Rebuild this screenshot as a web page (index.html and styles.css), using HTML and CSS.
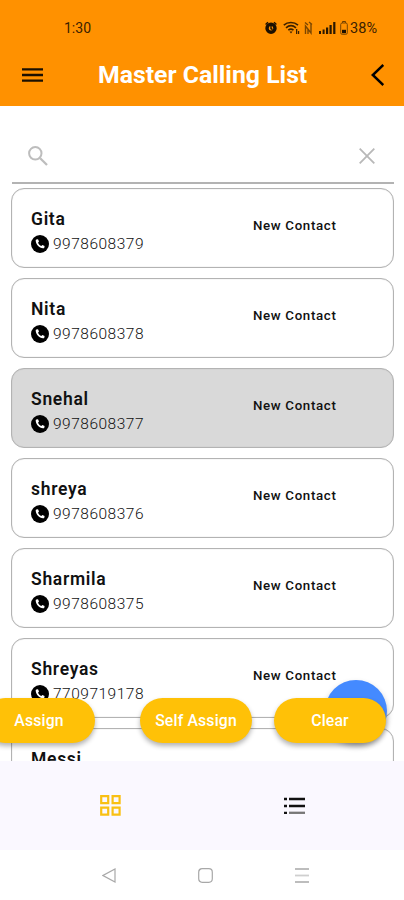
FILE: index.html
```html
<!DOCTYPE html>
<html lang="en">
<head>
    <meta charset="UTF-8">
    <meta name="viewport" content="width=device-width, initial-scale=1.0">
    <title>Master Calling List</title>
    <link rel="stylesheet" href="styles.css">
</head>
<body>
    <svg class="sprite" width="0" height="0">
        <symbol id="phone" viewBox="0 0 18 18">
            <circle cx="9" cy="9" r="9" fill="#000"/>
            <path d="M5.3 4.6 L7 4.3 L8 6.6 L7 7.7 C7.7 9.2 8.8 10.3 10.3 11 L11.4 10 L13.6 11 L13.3 12.8 C13 13.3 12.6 13.4 12 13.3 C8 12.8 5.1 9.8 4.7 5.8 C4.6 5.2 4.8 4.8 5.3 4.6Z" fill="#fff"/>
        </symbol>
    </svg>

    <header class="header">
        <div class="status-bar">
            <span class="time">1:30</span>
            <div class="status-icons">
                <svg class="alarm" width="12" height="14" viewBox="0 0 12 14">
                    <circle cx="6" cy="7.3" r="4" fill="none" stroke="#1c1000" stroke-width="3.4"/>
                    <path d="M6 5v2.6l1.6 1M.6 3.6L3 1.2M11.4 3.6L9 1.2" fill="none" stroke="#1c1000" stroke-width="1.4"/>
                </svg>
                <svg class="wifi" width="17" height="14" viewBox="0 0 17 14">
                    <path d="M.8 4.2C4.8.6 11 .6 15 4.2M3 6.8c3-2.6 7-2.6 10 0M5.3 9.2c1.6-1.3 3.6-1.3 5.2 0" fill="none" stroke="#3b2100" stroke-width="1.6"/>
                    <path d="M6.5 10.6h3L8 12.6zM13 8h1.3v5H13zM15 10h1.2v3H15z" fill="#3b2100"/>
                </svg>
                <svg class="nfc" width="9" height="14" viewBox="0 0 9 14">
                    <path d="M1.500 13V5l5.500 7V3M1 1.500l3 2.500M5 1l3 2.500M4 8v5" fill="none" stroke="#7a4600" stroke-width="1.400"/>
                </svg>
                <svg class="signal" width="17" height="12" viewBox="0 0 17 12">
                    <path d="M0 9h2v3H0zM3.600 7.500h2V12h-2zM7 5.500h2.200V12H7zM10.500 3h2.200v9h-2.200zM14.200 0h2.200v12h-2.200z" fill="#2a1800"/>
                </svg>
                <svg class="battery" width="8" height="14" viewBox="0 0 8 14">
                    <path d="M2.500 1.800V.6h3v1.200" fill="none" stroke="#5c3500"/>
                    <rect x=".7" y="2" width="6.600" height="11.300" rx="1.500" fill="none" stroke="#7a4600"/>
                    <path d="M2 8.800h4v3.400H2z" fill="#1c1000"/>
                </svg>
                <span class="percent">38%</span>
            </div>
        </div>
        <div class="title-bar">
            <svg class="menu" width="21" height="14" viewBox="0 0 21 14">
                <path d="M0 1.300h21M0 7h21M0 12.700h21" stroke="#1c1000" stroke-width="2.300"/>
            </svg>
            <h1>Master Calling List</h1>
            <svg class="back" width="13" height="22" viewBox="0 0 13 22">
                <path d="M12.300 1L1.800 11L12.300 21" fill="none" stroke="#000" stroke-width="2.500"/>
            </svg>
        </div>
    </header>

    <main class="content">
        <div class="search">
            <svg width="20" height="20" viewBox="0 0 20 20">
                <path d="M12.200 12.200L19 19" stroke="#bdbdbd" stroke-width="2.300"/>
                <circle cx="7.300" cy="7.300" r="6.200" fill="none" stroke="#bdbdbd" stroke-width="2"/>
            </svg>
            <svg width="16" height="16" viewBox="0 0 16 16">
                <path d="M.7.7l14.600 14.600M15.300.7L.7 15.300" stroke="#b8b8b8" stroke-width="1.800"/>
            </svg>
        </div>

        <div class="contact-list">
            <div class="contact">
                <div class="info">
                    <span class="name">Gita</span>
                    <span class="number"><svg><use href="#phone"/></svg>9978608379</span>
                </div>
                <span class="state">New Contact</span>
            </div>
            <div class="contact">
                <div class="info">
                    <span class="name">Nita</span>
                    <span class="number"><svg><use href="#phone"/></svg>9978608378</span>
                </div>
                <span class="state">New Contact</span>
            </div>
            <div class="contact selected">
                <div class="info">
                    <span class="name">Snehal</span>
                    <span class="number"><svg><use href="#phone"/></svg>9978608377</span>
                </div>
                <span class="state">New Contact</span>
            </div>
            <div class="contact">
                <div class="info">
                    <span class="name">shreya</span>
                    <span class="number"><svg><use href="#phone"/></svg>9978608376</span>
                </div>
                <span class="state">New Contact</span>
            </div>
            <div class="contact">
                <div class="info">
                    <span class="name">Sharmila</span>
                    <span class="number"><svg><use href="#phone"/></svg>9978608375</span>
                </div>
                <span class="state">New Contact</span>
            </div>
            <div class="contact">
                <div class="info">
                    <span class="name">Shreyas</span>
                    <span class="number"><svg><use href="#phone"/></svg>7709719178</span>
                </div>
                <span class="state">New Contact</span>
            </div>
            <div class="contact">
                <div class="info">
                    <span class="name">Messi</span>
                </div>
                <span class="state">New Contact</span>
            </div>
        </div>

        <div class="fab"></div>
        <div class="actions">
            <button class="action">Assign</button>
            <button class="action self">Self Assign</button>
            <button class="action">Clear</button>
        </div>
    </main>

    <nav class="tabs">
        <svg width="21" height="21" viewBox="0 0 21 21">
            <path d="M1.200 1.200h7v7h-7zM12.600 1.200h7v7h-7zM1.200 12.600h7v7h-7zM12.600 12.600h7v7h-7z" fill="none" stroke="#f9c013" stroke-width="2.200"/>
        </svg>
        <svg width="21" height="18" viewBox="0 0 21 18">
            <path d="M0 2h3M5 2h16M0 9h3M5 9h16M0 15.800h3" stroke="#111" stroke-width="2.300"/>
            <path d="M5 15.800h16" stroke="#777" stroke-width="2.300"/>
        </svg>
    </nav>

    <footer class="system-nav">
        <svg width="14" height="15" viewBox="0 0 14 15">
            <path d="M13 1v13L1 7.500z" fill="none" stroke="#a8a8a8" stroke-width="1.200"/>
        </svg>
        <svg width="15" height="15" viewBox="0 0 15 15">
            <rect x=".7" y=".7" width="13.600" height="13.600" rx="3.500" fill="none" stroke="#a8a8a8" stroke-width="1.200"/>
        </svg>
        <svg width="14" height="15" viewBox="0 0 14 15">
            <path d="M0 1h14M0 14h14" stroke="#a8a8a8" stroke-width="1.500"/>
            <path d="M0 7.500h14" stroke="#cfcfcf" stroke-width="1.800"/>
        </svg>
    </footer>
</body>
</html>
```
FILE: styles.css
```css
* {
    box-sizing: border-box;
}
body {
    margin: 0;
    height: 900px;
    display: flex;
    flex-direction: column;
    overflow: hidden;
    font-family: Roboto, sans-serif;
    color: #111;
    background-color: #fff;
}
svg {
    display: block;
    flex: none;
}
.sprite {
    position: absolute;
}
.header {
    height: 106px;
    flex: none;
    background-color: #FF9100;
}
.status-bar {
    height: 44px;
    padding: 12px 27px 0 64px;
    display: flex;
    justify-content: space-between;
    align-items: center;
    color: #3b2100;
}
.time {
    font-size: 14px;
}
.status-icons {
    display: flex;
    align-items: center;
}
.wifi {
    margin-left: 6px;
}
.nfc {
    margin-left: 4px;
}
.signal {
    margin-left: 6px;
}
.battery {
    margin-left: 4px;
}
.percent {
    margin-left: 2px;
    font-size: 14.5px;
}
.title-bar {
    height: 62px;
    padding: 0 20px 0 22px;
    display: flex;
    align-items: center;
}
h1 {
    margin: 0 64px 0 55px;
    width: 209px;
    font-size: 24.8px;
    font-weight: 700;
    line-height: 28px;
    text-align: center;
    white-space: nowrap;
    color: #fff;
}
.content {
    height: 655px;
    flex: none;
    position: relative;
    overflow: hidden;
}
.search {
    height: 78px;
    margin: 0 10px 0 12px;
    padding: 23px 19px 0 16px;
    border-bottom: 2px solid #b3b3b3;
    display: flex;
    justify-content: space-between;
    align-items: center;
}
.contact-list {
    padding: 4px 10px 0 11px;
    display: flex;
    flex-direction: column;
    gap: 10px;
}
.contact {
    height: 80px;
    flex: none;
    padding: 19px 0 0 19px;
    border: 1px solid #b3b3b3;
    border-radius: 13px;
    box-shadow: inset 0 0 1px #aaa;
    display: flex;
}
.contact.selected {
    background-color: #d9d9d9;
}
.info {
    width: 222px;
}
.name {
    display: block;
    font-size: 17.5px;
    font-weight: 600;
    line-height: 22px;
    letter-spacing: 0.7px;
}
.number {
    margin-top: 5px;
    display: flex;
    align-items: center;
    gap: 4px;
    height: 18px;
    font-size: 15.5px;
    font-weight: 300;
    letter-spacing: 0.5px;
}
.number svg {
    width: 18px;
    height: 18px;
}
.state {
    margin-top: 10px;
    font-size: 13.3px;
    font-weight: 500;
    line-height: 16px;
    letter-spacing: 0.65px;
}
.fab {
    position: absolute;
    left: 325px;
    top: 574px;
    width: 62px;
    height: 62px;
    border-radius: 50%;
    background-color: #448AFF;
    box-shadow: 0 4px 6px rgba(0, 0, 0, 0.3);
}
.actions {
    position: absolute;
    left: -17px;
    right: 17px;
    top: 592px;
    display: flex;
}
.action {
    width: 112px;
    height: 45px;
    padding: 0;
    border: none;
    border-radius: 23px;
    background-color: #FFC107;
    color: #fff;
    font-family: inherit;
    font-size: 15.8px;
    font-weight: 500;
    letter-spacing: 0.15px;
    box-shadow: 0 3px 5px rgba(0, 0, 0, 0.3);
}
.action.self {
    margin: 0 22px 0 45px;
}
.tabs {
    height: 89px;
    flex: none;
    padding: 0 99px 0 100px;
    display: flex;
    justify-content: space-between;
    align-items: center;
    background-color: #FAF8FF;
}
.system-nav {
    height: 50px;
    padding: 0 95px 0 102px;
    display: flex;
    justify-content: space-between;
    align-items: center;
}
```
